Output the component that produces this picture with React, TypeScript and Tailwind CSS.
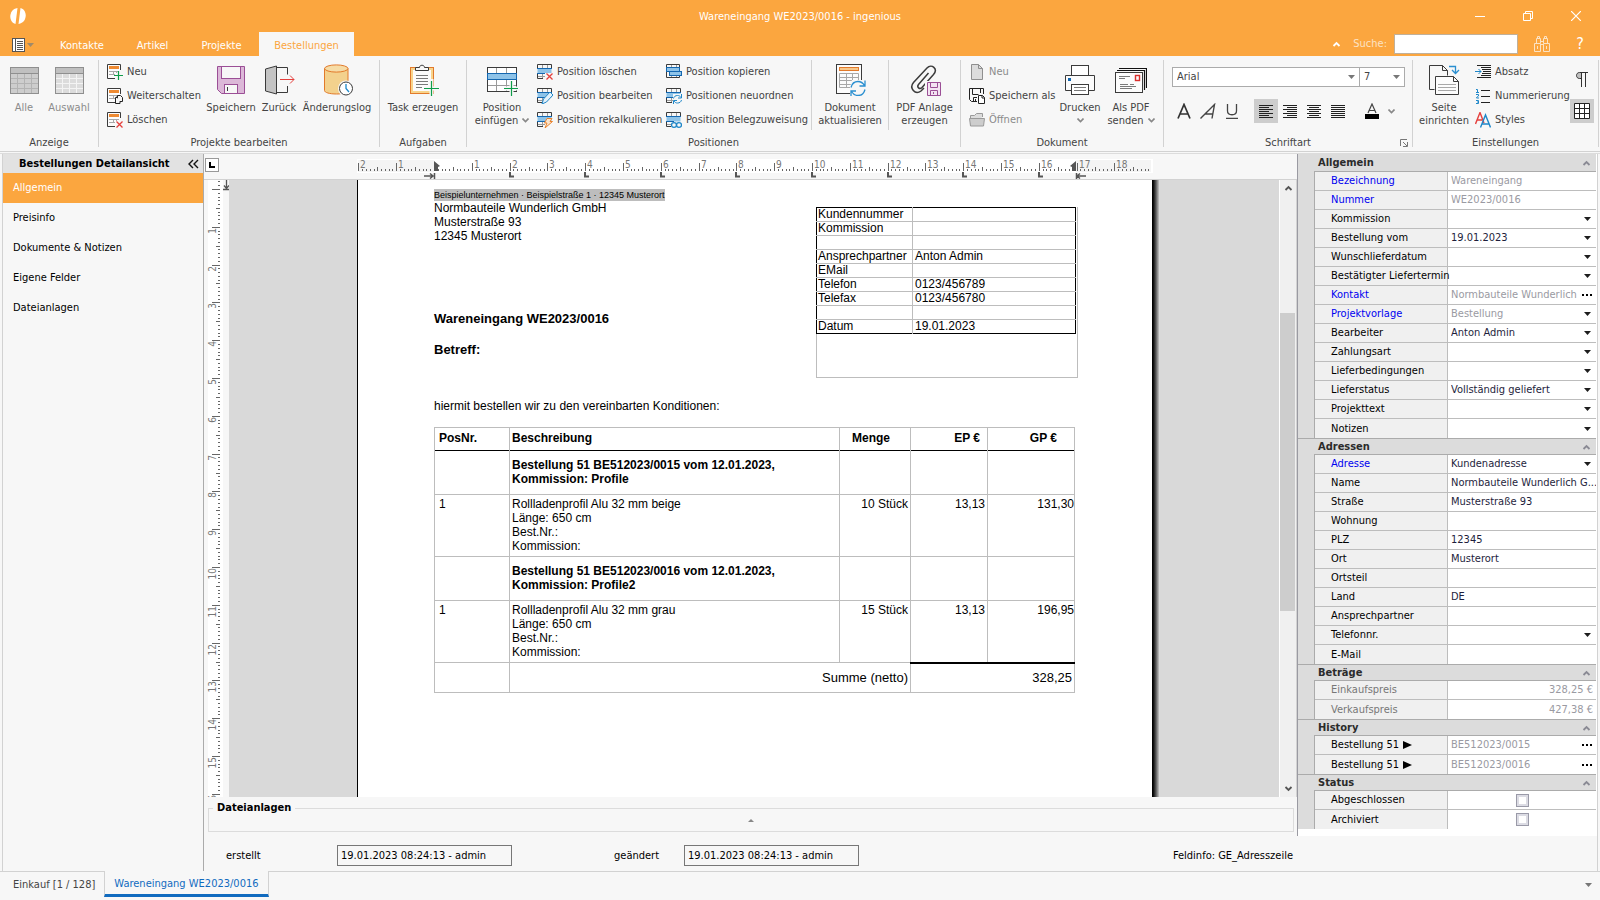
import type { ReactNode } from "react";
import clsx from "clsx";

/* ---------- shared icon parts ---------- */

const Svg = ({
  size,
  children,
}: {
  size: number;
  children: ReactNode;
}) => (
  <svg
    width={size}
    height={size}
    viewBox={`0 0 ${size} ${size}`}
    fill="none"
    className="shrink-0"
    aria-hidden="true"
  >
    {children}
  </svg>
);

const Chevron = ({ className }: { className?: string }) => (
  <svg width="7" height="5" viewBox="0 0 7 5" fill="none" className={className} aria-hidden="true">
    <path d="M0.5 0.5 3.5 3.5 6.5 0.5" stroke="currentColor" strokeWidth="1.6" />
  </svg>
);

const ChevronUp = ({ className }: { className?: string }) => (
  <svg width="9" height="6" viewBox="0 0 9 6" fill="none" className={className} aria-hidden="true">
    <path d="M1.5 5 4.5 2 7.5 5" stroke="currentColor" strokeWidth="1.8" />
  </svg>
);

const Caret = ({ className }: { className?: string }) => (
  <svg width="7" height="4" viewBox="0 0 7 4" className={className} aria-hidden="true">
    <path d="M0 0h7L3.5 4z" fill="currentColor" />
  </svg>
);

/* ---------- 32px icons ---------- */

const GridIcon = ({ light }: { light?: boolean }) => (
  <Svg size={32}>
    <rect x="2.5" y="3.5" width="28" height="26" fill={light ? "#dcdcdc" : "#cdcdcd"} stroke="#8f8f8f" />
    <path d="M3 4h27v5H3z" fill="#c0c0c0" />
    <path d="M2 9.5h29" stroke="#8f8f8f" />
    <path
      d="M3 14.5h27M3 19.5h27M3 24.5h27M9.5 10v19M16.5 10v19M23.5 10v19"
      stroke={light ? "#f4f4f4" : "#b3b3b3"}
    />
  </Svg>
);

const SaveIcon = () => (
  <Svg size={32}>
    <path d="M2.5 2.5h27v27H6.5L2.5 25.5z" fill="#dcb8d8" stroke="#9b4f96" />
    <rect x="6.5" y="2.5" width="19" height="12" fill="#f7f7f7" stroke="#9b4f96" />
    <rect x="9.5" y="20.5" width="13" height="9" fill="#f7f7f7" stroke="#9b4f96" />
    <path d="M12.5 23v4" stroke="#3b3b3b" />
  </Svg>
);

const DoorIcon = () => (
  <Svg size={32}>
    <path d="M14 3.5h10.5v7M24.5 22v6.5H14" stroke="#3b3b3b" />
    <path d="M2.5 5 13.5 2v28L2.5 27z" fill="#c4c4c4" stroke="#3b3b3b" />
    <path d="M17 15.5h14M27 11.5l4 4-4 4" stroke="#e5403d" />
  </Svg>
);

const LogIcon = () => (
  <Svg size={32}>
    <path d="M3.5 4.5v22c0 2 5 3.5 12 3.5s11.500-1.500 11.500-3.500v-22z" fill="#f3d18d" stroke="#e27a2b" />
    <ellipse cx="15.3" cy="4.5" rx="11.7" ry="3.600" fill="#f6dca6" stroke="#e27a2b" />
    <circle cx="25" cy="24.500" r="8" fill="#f7f7f7" />
    <circle cx="25" cy="24.500" r="6.500" fill="#fff" stroke="#3b3b3b" />
    <path d="M25 20v4.500l3 3.500" stroke="#1e88c9" strokeWidth="1.3" />
  </Svg>
);

const TaskIcon = () => (
  <Svg size={32}>
    <rect x="3.5" y="3.5" width="23" height="26" fill="#f8d48c" stroke="#e27a2b" />
    <rect x="6" y="6" width="18" height="21" fill="#fcfcfc" />
    <path d="M8.5 6.5v-3h4c0-3 5-3 5 0h4v3z" fill="#f7f7f7" stroke="#3b3b3b" />
    <path d="M9 11.5h12M9 14.5h12M9 17.5h12M9 20.5h12M9 23.5h6" stroke="#7a7a7a" />
    <path d="M24.5 15v17M17 24.5h15" stroke="#f7f7f7" strokeWidth="4" />
    <path d="M24.5 17v15M17 24.5h15" stroke="#0f9d4a" strokeWidth="1.2" />
  </Svg>
);

const InsertIcon = () => (
  <Svg size={32}>
    <rect x="1.5" y="3.5" width="29" height="24" fill="#fff" />
    <path d="M10.5 4v23M20.5 4v23M2 21.5h28" stroke="#9a9a9a" />
    <rect x="1.5" y="3.5" width="29" height="24" stroke="#3b3b3b" />
    <rect x="1.5" y="9.5" width="29" height="6" fill="#8ec3e8" stroke="#1467b0" />
    <path d="M25.5 17v15M18 24.5h14" stroke="#f7f7f7" strokeWidth="4" />
    <path d="M25.5 17v15M18 24.5h14" stroke="#0f9d4a" strokeWidth="1.2" />
  </Svg>
);

const RefreshDocIcon = () => (
  <Svg size={32}>
    <rect x="2.5" y="0.5" width="25" height="29" fill="#fcfcfc" stroke="#3b3b3b" />
    <rect x="5.5" y="3.5" width="19" height="3" fill="#f8c88c" stroke="#e27a2b" />
    <path d="M5.5 9.5h19v14h-19zM5.5 13.5h19M5.5 16.5h19M5.5 20.5h19M12.5 9.5v14M18.5 9.5v14" stroke="#a8a8a8" />
    <path d="M18 16h14v16H16v-9z" fill="#f7f7f7" />
    <path
      d="M17 23.5c1-4 4-6 7-6 3 0 5 1.5 6.5 4M31 16.5v5.5h-5.5M31 25.5c-1 4-4 6-7 6-3 0-5-1.5-6.5-4M17 32v-5h5"
      stroke="#2a8fd0"
      strokeWidth="1.3"
    />
  </Svg>
);

const ClipIcon = () => (
  <Svg size={32}>
    <path
      d="M19.5 9 9.5 20.5c-2 2.5 1 5.5 3.5 3L24.5 10.5c5-6-2-11-6.5-6.5L4.5 18.5C0 24 6 31.5 12 27l3-3"
      stroke="#3b3b3b"
      strokeWidth="1.5"
    />
    <rect x="16" y="17" width="16" height="15" fill="#f7f7f7" />
    <path d="M18.5 18.5h13v13h-13z" fill="#f3e4f2" stroke="#9b4f96" />
    <path d="M21.5 18.5h7v5h-7zM21.5 31v-4.5h7V31M24.5 28v2" stroke="#9b4f96" />
  </Svg>
);

const PrintIcon = () => (
  <Svg size={32}>
    <rect x="7.5" y="1.5" width="17" height="12" fill="#fff" stroke="#3b3b3b" />
    <path d="M1.5 11.5h29v15h-29z" fill="#fcfcfc" stroke="#3b3b3b" />
    <rect x="4" y="14" width="3" height="3" fill="#1467b0" />
    <rect x="7.5" y="20.5" width="17" height="10" fill="#fff" stroke="#3b3b3b" />
    <path d="M10 23.5h12M10 26.5h12" stroke="#7a7a7a" />
    <path d="M8 11.5h16" stroke="#3b3b3b" />
  </Svg>
);

const MailIcon = () => (
  <Svg size={32}>
    <path d="M4 4.5h27.5V24M2 6.5h27.5V26" stroke="#111" strokeWidth="1.2" />
    <rect x="0.5" y="8.5" width="27" height="20" fill="#fcfcfc" stroke="#3b3b3b" />
    <rect x="20.5" y="11.5" width="4" height="5" stroke="#d9302d" strokeWidth="1.4" />
    <path d="M4 12.5h11M4 14.5h6M5 20.5h8M15 20.5h4M5 22.5h16M5 24.5h12" stroke="#7a7a7a" />
  </Svg>
);

const PageSetupIcon = () => (
  <Svg size={32}>
    <path d="M6.5 25.5h-5v-24h13l5 5v5" stroke="#3b3b3b" />
    <path d="M14.5 1.5v5h5" stroke="#3b3b3b" />
    <path d="M21 2.5h6.5V9M24 6l3.5 3.5L31 6" stroke="#2a8fd0" strokeWidth="1.3" />
    <path d="M7.5 12.5h18l5 5v13h-23z" fill="#fcfcfc" stroke="#3b3b3b" />
    <path d="M25.5 12.5v5h5" stroke="#3b3b3b" />
    <path d="M10 20.5h18M10 23.5h18M10 26.5h18" stroke="#a8a8a8" />
  </Svg>
);

/* ---------- 16px icons ---------- */

const FormBase = () => (
  <>
    <path d="M8 14.5H0.5v-14h13V6" fill="#fcfcfc" stroke="#3b3b3b" />
    <rect x="2" y="2" width="10" height="3" fill="#ee8a32" />
    <path d="M2 7.5h10M2 10.5h6M6.5 7v4M9.5 7v2" stroke="#a8a8a8" />
  </>
);

const NewIcon = () => (
  <Svg size={16}>
    <FormBase />
    <path d="M11.5 7v9M7 11.5h9" stroke="#0f9d4a" strokeWidth="1.2" />
  </Svg>
);

const ForwardIcon = () => (
  <Svg size={16}>
    <FormBase />
    <path d="M10.5 7.5h3l2 2v4h-5z" fill="#f7f7f7" stroke="#222" />
    <path d="M10 9.5H8.5v6H13v-2" fill="#f7f7f7" stroke="#222" />
  </Svg>
);

const DeleteIcon = () => (
  <Svg size={16}>
    <FormBase />
    <path d="M9.5 9.5 15.5 15.5M15.5 9.5 9.5 15.5" stroke="#e5403d" strokeWidth="1.3" />
  </Svg>
);

const RowBase = () => (
  <>
    <path d="M5.5 1v14M10.5 1v5M1 12.5h7" stroke="#9a9a9a" />
    <path d="M0.5 4V0.5h14V4M0.5 10v4.5H6" stroke="#3b3b3b" />
    <rect x="0.5" y="4.5" width="14" height="5" fill="#8ec3e8" />
    <path d="M0 4.5h15M0 9.5h8" stroke="#1467b0" />
  </>
);

const RowDeleteIcon = () => (
  <Svg size={16}>
    <RowBase />
    <rect x="8" y="9" width="8" height="7" fill="#f7f7f7" />
    <path d="M9.5 9.5 15.5 15.5M15.5 9.5 9.5 15.5" stroke="#e5403d" strokeWidth="1.3" />
  </Svg>
);

const RowEditIcon = () => (
  <Svg size={16}>
    <RowBase />
    <path d="M5 16 6.5 11 13 4l3 3-6.5 7z" fill="#e4f1fa" stroke="#1f87c9" />
  </Svg>
);

const RowCalcIcon = () => (
  <Svg size={16}>
    <RowBase />
    <path d="M10 6.5h5l-2 3h2.5L8 16l2-5H7.5z" fill="#fbe6cf" stroke="#e9832d" />
  </Svg>
);

const RowCopyIcon = () => (
  <Svg size={16}>
    <path d="M5.5 1v13M10.5 1v13" stroke="#9a9a9a" />
    <path d="M0.5 4V0.5h13V4M0.5 8v5.5H13.5V11" stroke="#3b3b3b" />
    <rect x="0.5" y="3.5" width="13" height="4" fill="#8ec3e8" stroke="#1467b0" />
    <rect x="3.5" y="7.5" width="12" height="4" fill="#8ec3e8" stroke="#1467b0" />
  </Svg>
);

const RowSortIcon = () => (
  <Svg size={16}>
    <RowBase />
    <rect x="7" y="6" width="9" height="10" fill="#f7f7f7" />
    <path
      d="M7.5 10.5c.5-2 2-3 4-3 1.5 0 2.5.5 3.5 2M15.5 6v4H12M15.5 12c-.5 2-2 3-4 3-1.5 0-2.5-.5-3.5-2M7.5 16v-3.5H11"
      stroke="#1f87c9"
    />
  </Svg>
);

const RowLinkIcon = () => (
  <Svg size={16}>
    <RowBase />
    <rect x="5" y="10" width="11" height="6" fill="#f7f7f7" />
    <ellipse cx="8" cy="13" rx="2.5" ry="2.3" stroke="#1f87c9" strokeWidth="1.3" />
    <ellipse cx="13" cy="13" rx="2.5" ry="2.3" stroke="#1f87c9" strokeWidth="1.3" />
  </Svg>
);

const FileIcon = () => (
  <Svg size={16}>
    <path d="M2.5 0.5h7l4 4v11h-11z" fill="#dcdcdc" stroke="#8f8f8f" />
    <path d="M9.5 0.5v4h4" stroke="#8f8f8f" />
  </Svg>
);

const SaveAsIcon = () => (
  <Svg size={16}>
    <path d="M8 13.5H2.5L0.5 11.5V0.5h14V6M3.5 1v5.5h6M11.5 1v4M4.5 13V9.5H8M6.5 11v2" stroke="#222" />
    <path d="M9.5 7.5h4l2 2v6h-6z" fill="#fff" stroke="#222" />
    <path d="M13 7.5v2.5h2.5" stroke="#222" />
  </Svg>
);

const FolderIcon = () => (
  <Svg size={16}>
    <path d="M1.5 13.5v-10h4l2-2h6v3.5" fill="#dcdcdc" stroke="#9a9a9a" />
    <path d="M0.5 6.5h15l-1 7.5h-13z" fill="#cdcdcd" stroke="#9a9a9a" />
  </Svg>
);

const ParagraphIcon = () => (
  <Svg size={16}>
    <path d="M2 1.5h14M6 3.5h10M7 5.5h9M8 7.5h8M7 9.5h9M6 11.5h10M2 13.5h14" stroke="#222" />
    <path d="M0 7.5h6M3.5 5l2.5 2.5L3.5 10" stroke="#1f87c9" />
  </Svg>
);

const NumberingIcon = () => (
  <Svg size={16}>
    <path d="M6 2.5h9M6 8.5h9M6 14.5h9" stroke="#222" />
    <path d="M1 1.5h1.5V4M1 4.5h3M1 6.5h2.5v1.5L1.5 9.5V10H4M1 12.5h2.5v3H1M2 14h1.5" stroke="#1f87c9" />
  </Svg>
);

const StylesIcon = () => (
  <Svg size={16}>
    <path d="M0.5 12 5 0.5 9 11M2 8h5" stroke="#e5403d" strokeWidth="1.4" />
    <path d="M5.5 15.5 10.5 3l5 12.5M7 12h7" stroke="#1f87c9" strokeWidth="1.4" />
  </Svg>
);

const AlignIcon = ({ ends }: { ends: [number, number] }) => (
  <svg width="14" height="13" viewBox="0 0 14 13" aria-hidden="true">
    {[0, 2, 4, 6, 8, 10, 12].map((y, i) => (
      <rect
        key={y}
        x={i % 2 ? ends[0] : 0}
        y={y}
        width={i % 2 ? ends[1] : 14}
        height="1"
        fill="#222"
      />
    ))}
  </svg>
);

/* ---------- ribbon parts ---------- */

const Group = ({
  label,
  className,
  children,
  launcher,
}: {
  label: string;
  className?: string;
  children: ReactNode;
  launcher?: boolean;
}) => (
  <section className={clsx("flex shrink-0 flex-col", className)} aria-label={label}>
    <div className="flex h-20 pt-1">{children}</div>
    <div className="relative h-4 text-center leading-4">
      {label}
      {launcher && (
        <button aria-label="Schriftart öffnen" className="absolute right-1 top-1">
          <svg width="8" height="8" viewBox="0 0 8 8" fill="none">
            <path d="M0.5 7V0.5H7M7.5 3v4.5H3M3 3l4 4" stroke="#777" />
          </svg>
        </button>
      )}
    </div>
  </section>
);

const Divider = () => <div className="mt-1 h-[87px] w-px shrink-0 bg-[#d2d2d2]" />;

const ShortDivider = () => <div className="h-[70px] w-px shrink-0 bg-[#d2d2d2]" />;

const BigButton = ({
  icon,
  lines,
  className,
  menu,
  disabled,
}: {
  icon: ReactNode;
  lines: string[];
  className?: string;
  menu?: boolean;
  disabled?: boolean;
}) => (
  <button
    disabled={disabled}
    className={clsx(
      "flex shrink-0 flex-col items-center whitespace-nowrap pt-1 leading-[13px]",
      disabled && "text-[#8b8b8b]",
      className
    )}
  >
    <span className="mb-[5px]">{icon}</span>
    {lines.map((line, i) => (
      <span key={i} className="flex h-[13px] items-center gap-1">
        {line}
        {menu && i === lines.length - 1 && <Chevron className="text-[#888]" />}
      </span>
    ))}
  </button>
);

const SmallButton = ({
  icon,
  label,
  disabled,
}: {
  icon: ReactNode;
  label: string;
  disabled?: boolean;
}) => (
  <button
    disabled={disabled}
    className={clsx(
      "flex h-6 items-center gap-1 whitespace-nowrap text-left",
      disabled && "text-[#8b8b8b]"
    )}
  >
    {icon}
    {label}
  </button>
);

const Ribbon = () => (
  <div className="flex h-24 overflow-hidden border-b border-[#d2d2d2] bg-[#f7f7f7] text-[#444]">
    <Group label="Anzeige" className="w-[98px]">
      <BigButton icon={<GridIcon />} lines={["Alle"]} className="w-12" disabled />
      <BigButton icon={<GridIcon light />} lines={["Auswahl"]} className="w-[42px]" disabled />
    </Group>
    <Divider />
    <Group label="Projekte bearbeiten" className="w-[280px]">
      <div className="flex w-[105px] flex-col pl-2">
        <SmallButton icon={<NewIcon />} label="Neu" />
        <SmallButton icon={<ForwardIcon />} label="Weiterschalten" />
        <SmallButton icon={<DeleteIcon />} label="Löschen" />
      </div>
      <BigButton icon={<SaveIcon />} lines={["Speichern"]} className="w-[54px]" />
      <BigButton icon={<DoorIcon />} lines={["Zurück"]} className="w-[42px]" />
      <BigButton icon={<LogIcon />} lines={["Änderungslog"]} className="w-[74px]" />
    </Group>
    <Divider />
    <Group label="Aufgaben" className="w-[86px]">
      <BigButton icon={<TaskIcon />} lines={["Task erzeugen"]} className="w-full" />
    </Group>
    <Divider />
    <Group label="Positionen" className="w-[493px]">
      <BigButton icon={<InsertIcon />} lines={["Position", "einfügen"]} className="w-[70px]" menu />
      <div className="flex w-[129px] flex-col">
        <SmallButton icon={<RowDeleteIcon />} label="Position löschen" />
        <SmallButton icon={<RowEditIcon />} label="Position bearbeiten" />
        <SmallButton icon={<RowCalcIcon />} label="Position rekalkulieren" />
      </div>
      <div className="flex w-[145px] flex-col">
        <SmallButton icon={<RowCopyIcon />} label="Position kopieren" />
        <SmallButton icon={<RowSortIcon />} label="Positionen neuordnen" />
        <SmallButton icon={<RowLinkIcon />} label="Position Belegzuweisung" />
      </div>
      <ShortDivider />
      <BigButton icon={<RefreshDocIcon />} lines={["Dokument", "aktualisieren"]} className="w-[76px]" />
      <ShortDivider />
      <BigButton icon={<ClipIcon />} lines={["PDF Anlage", "erzeugen"]} className="w-[71px]" />
    </Group>
    <Divider />
    <Group label="Dokument" className="w-[202px]">
      <div className="flex w-[94px] flex-col pl-2">
        <SmallButton icon={<FileIcon />} label="Neu" disabled />
        <SmallButton icon={<SaveAsIcon />} label="Speichern als" />
        <SmallButton icon={<FolderIcon />} label="Öffnen" disabled />
      </div>
      <BigButton icon={<PrintIcon />} lines={["Drucken", ""]} className="w-[50px]" menu />
      <BigButton icon={<MailIcon />} lines={["Als PDF", "senden"]} className="w-[52px]" menu />
    </Group>
    <Divider />
    <Group label="Schriftart" className="w-[248px]" launcher>
      <div className="flex flex-col pl-2 pt-[7px]">
        <div className="flex">
          <label className="flex h-5 w-[188px] items-center border border-[#ababab] bg-white pr-1">
            <select
              aria-label="Schriftart"
              className="w-full appearance-none bg-transparent pl-1 outline-none"
            >
              <option>Arial</option>
            </select>
            <Caret className="pointer-events-none shrink-0 text-[#777]" />
          </label>
          <label className="-ml-px flex h-5 w-[46px] items-center border border-[#ababab] bg-white pr-1">
            <select
              aria-label="Schriftgröße"
              className="w-full appearance-none bg-transparent pl-1 outline-none"
            >
              <option>7</option>
            </select>
            <Caret className="pointer-events-none shrink-0 text-[#777]" />
          </label>
        </div>
        <div className="mt-3 flex items-center">
          <button aria-label="Fett" className="flex size-6 items-center justify-center">
            <Svg size={16}>
              <path d="M2 15.5 8 1.5l6 14M4 11h8" stroke="#333" strokeWidth="1.7" />
            </Svg>
          </button>
          <button aria-label="Kursiv" className="flex size-6 items-center justify-center">
            <Svg size={16}>
              <path d="M0.5 15.5 14.5 1.5 12 15.5M5 11h8" stroke="#444" strokeWidth="1.4" />
            </Svg>
          </button>
          <button aria-label="Unterstrichen" className="flex size-6 items-center justify-center">
            <Svg size={16}>
              <path d="M3.5 1v7c0 5 9 5 9 0V1M2 15.5h12" stroke="#444" strokeWidth="1.3" />
            </Svg>
          </button>
          <button
            aria-label="Linksbündig"
            className="ml-[10px] flex size-6 items-center justify-center bg-[#cdcdcd]"
          >
            <AlignIcon ends={[0, 10]} />
          </button>
          <button aria-label="Rechtsbündig" className="flex size-6 items-center justify-center">
            <AlignIcon ends={[4, 10]} />
          </button>
          <button aria-label="Zentriert" className="flex size-6 items-center justify-center">
            <AlignIcon ends={[2, 10]} />
          </button>
          <button aria-label="Blocksatz" className="flex size-6 items-center justify-center">
            <AlignIcon ends={[0, 14]} />
          </button>
          <button aria-label="Schriftfarbe" className="ml-[14px] flex h-6 items-center gap-2">
            <Svg size={16}>
              <path d="M4 10 8 1l4 9M5 7.5h6" stroke="#444" strokeWidth="1.2" />
              <path d="M1 11h14v5H1z" fill="#000" />
            </Svg>
            <Chevron className="text-[#888]" />
          </button>
        </div>
      </div>
    </Group>
    <Divider />
    <Group label="Einstellungen" className="w-[185px]">
      <BigButton icon={<PageSetupIcon />} lines={["Seite", "einrichten"]} className="w-[62px]" />
      <div className="flex w-[95px] flex-col">
        <SmallButton icon={<ParagraphIcon />} label="Absatz" />
        <SmallButton icon={<NumberingIcon />} label="Nummerierung" />
        <SmallButton icon={<StylesIcon />} label="Styles" />
      </div>
      <div className="flex flex-col gap-2 pt-[7px]">
        <button aria-label="Formatierungszeichen" className="flex size-6 items-center justify-center">
          <Svg size={16}>
            <path d="M14 1.5H5.5c-4 0-4 6 0 6h2V1.5" fill="#c0c0c0" stroke="#333" />
            <path d="M7.5 1.5V16M11.5 1.5V16" stroke="#333" />
          </Svg>
        </button>
        <button aria-label="Rasterlinien" className="flex size-6 items-center justify-center bg-[#cdcdcd]">
          <Svg size={16}>
            <path
              d="M0.5 0.5h15v15h-15zM5.5 0v16M10.5 0v16M0 5.5h16M0 10.5h16"
              fill="#fff"
              stroke="#222"
            />
          </Svg>
        </button>
      </div>
    </Group>
    <Divider />
  </div>
);

/* ---------- title bar ---------- */

const TABS = [
  { name: "Kontakte", width: "w-[78px]" },
  { name: "Artikel", width: "w-[63px]" },
  { name: "Projekte", width: "w-[75px]" },
  { name: "Bestellungen", width: "w-[95px]", active: true },
];

const TitleBar = () => (
  <header className="bg-[#fba63f] text-white">
    <div className="flex h-8 items-center">
      <div className="flex w-36 pl-[10px]">
        <Svg size={16}>
          <path d="M7.5 0 5.5 16C-1.5 14.5-2 1.5 7.5 0z" fill="#fff" />
          <path d="M10.5 0C17.5 1.5 18 14.5 8.5 16z" fill="#fff" />
        </Svg>
      </div>
      <div className="flex-1 pt-px text-center">Wareneingang WE2023/0016 - ingenious</div>
      <div className="flex w-36">
        <button aria-label="Minimieren" className="flex h-8 w-12 items-center justify-center">
          <span className="h-px w-[10px] bg-white" />
        </button>
        <button aria-label="Wiederherstellen" className="flex h-8 w-12 items-center justify-center">
          <svg width="10" height="10" viewBox="0 0 10 10" fill="none">
            <path d="M0.5 2.5h7v7h-7zM2.5 2.5v-2h7v7h-2" stroke="#fff" />
          </svg>
        </button>
        <button aria-label="Schließen" className="flex h-8 w-12 items-center justify-center">
          <svg width="10" height="10" viewBox="0 0 10 10" fill="none">
            <path d="M0 0 10 10M10 0 0 10" stroke="#fff" strokeWidth="1.2" />
          </svg>
        </button>
      </div>
    </div>
    <div className="flex h-6 items-stretch">
      <button aria-label="Menü" className="flex w-[43px] items-center gap-[2px] pl-3 pt-[2px]">
        <svg width="13" height="14" viewBox="0 0 13 14" fill="none">
          <rect x="0.5" y="0.5" width="12" height="13" fill="#fff" stroke="#555" />
          <path d="M3.5 0v14M5 3.5h6M5 5.5h6M5 7.5h6M5 9.5h6M5 11.5h6" stroke="#555" />
        </svg>
        <Caret className="text-[#a08a68]" />
      </button>
      <nav className="flex">
        {TABS.map((tab) => (
          <a
            key={tab.name}
            href="#"
            className={clsx(
              "flex items-center justify-center pt-[3px]",
              tab.width,
              tab.active && "bg-[#f7f7f7] text-[#fba63f]"
            )}
          >
            {tab.name}
          </a>
        ))}
      </nav>
      <div className="ml-auto flex items-center pr-4">
        <ChevronUp className="mr-3 text-white" />
        <label htmlFor="suche" className="mr-[7px] text-[#fbe3c4]">
          Suche:
        </label>
        <input id="suche" className="h-5 w-[124px] border border-[#c0b09a] bg-white px-1 text-black outline-none" />
        <button aria-label="Suchen" className="ml-4">
          <svg width="16" height="16" viewBox="0 0 16 16" fill="none">
            <path
              d="M0.5 7.5h6v8h-6zM9.5 7.5h6v8h-6zM2.5 7V2.5h4V7M9.5 7V2.5h4V7M3.5 2V0.5h2V2M10.5 2V0.5h2V2M7 5.5h2M7 8.5h2M3.5 10v3M12.5 10v3"
              stroke="#fbe3c4"
            />
          </svg>
        </button>
        <button aria-label="Hilfe" className="ml-[26px] w-2 text-base leading-4">
          ?
        </button>
      </div>
    </div>
  </header>
);

/* ---------- sidebar ---------- */

const Sidebar = () => (
  <aside className="ml-[2px] w-[202px] shrink-0 border-x border-l-[#d2d2d2] border-r-[#ababab]">
    <div className="flex h-[19px] items-center justify-between bg-[#e2e2e2] pl-4 pr-1 font-bold text-black">
      Bestellungen Detailansicht
      <button aria-label="Einklappen">
        <svg width="11" height="10" viewBox="0 0 11 10" fill="none">
          <path d="M5 1 1 5l4 4M10 1 6 5l4 4" stroke="#111" strokeWidth="1.4" />
        </svg>
      </button>
    </div>
    <nav>
      {["Allgemein", "Preisinfo", "Dokumente & Notizen", "Eigene Felder", "Dateianlagen"].map((item, i) => (
        <a
          key={item}
          href="#"
          className={clsx("flex h-[30px] items-center pl-[10px]", i === 0 ? "bg-[#fba63f] text-white" : "text-black")}
        >
          {item}
        </a>
      ))}
    </nav>
  </aside>
);

/* ---------- rulers ---------- */

const CM = 37.8;

const tickLength = (mm: number) => (mm % 10 === 0 ? 8 : mm % 5 === 0 ? 4 : 2);

const HorizontalRuler = () => {
  const ticks = Array.from({ length: 210 }, (_, i) => i - 20);
  return (
    <svg width="797" height="26" viewBox="0 0 797 26" className="shrink-0" aria-hidden="true">
      <rect x="1" y="5" width="796" height="14" fill="#fff" />
      <rect x="2" y="6" width="76" height="12" fill="#f4f4f4" />
      <rect x="720" y="6" width="75" height="12" fill="#f4f4f4" />
      {ticks.map((mm) => (
        <rect
          key={mm}
          x={Math.round(78 + (mm * CM) / 10)}
          y={17 - tickLength(mm)}
          width="1"
          height={tickLength(mm)}
          fill="#666"
        />
      ))}
      {[-2, -1, 1, 2, 3, 4, 5, 6, 7, 8, 9, 10, 11, 12, 13, 14, 15, 16, 17, 18].map((cm) => (
        <text key={cm} x={Math.round(80 + cm * CM)} y="14" fontSize="10" fill="#777">
          {Math.abs(cm)}
        </text>
      ))}
      {[2, 4, 6, 8, 10, 12, 14, 16].map((cm) => (
        <path key={cm} d={`M${Math.round(77 + cm * CM) + 1} 18v4.5h4`} stroke="#555" strokeWidth="2" fill="none" />
      ))}
      <path d="M78 7l6 5-2 1v4h-4z" fill="#555" />
      <path d="M720 7v10h-4v-4l-2-1z" fill="#555" />
      <path d="M68 22h9M74 19.5l3 2.5-3 2.5M78.5 19v6" stroke="#555" strokeWidth="1.5" fill="none" />
      <path d="M730 22h-9M724 19.5l-3 2.5 3 2.5M720.5 19v6" stroke="#555" strokeWidth="1.5" fill="none" />
    </svg>
  );
};

const VerticalRuler = () => {
  const ticks = Array.from({ length: 163 }, (_, i) => i - 2);
  return (
    <div className="relative w-[25px] shrink-0 overflow-hidden">
      <svg width="25" height="900" viewBox="0 0 25 900" className="absolute left-0 top-0" aria-hidden="true">
        <rect x="4" width="15" height="900" fill="#fff" />
        {ticks.map((mm) => (
          <rect
            key={mm}
            x={16 - tickLength(mm)}
            y={Math.round(9 + (mm * CM) / 10)}
            width={tickLength(mm)}
            height="1"
            fill="#666"
          />
        ))}
        {Array.from({ length: 16 }, (_, i) => i + 1).map((cm) => (
          <text
            key={cm}
            fontSize="10"
            fill="#777"
            textAnchor="end"
            transform={`translate(12 ${Math.round(10 + cm * CM)}) rotate(-90)`}
          >
            {cm}
          </text>
        ))}
        <path d="M22.5 0v8M20 5.5l2.5 3 2.5-3M19 9.5h6" stroke="#555" strokeWidth="1.3" fill="none" />
      </svg>
    </div>
  );
};

/* ---------- document ---------- */

const INFO_ROWS = [
  ["Kundennummer", ""],
  ["Kommission", ""],
  ["", ""],
  ["Ansprechpartner", "Anton Admin"],
  ["EMail", ""],
  ["Telefon", "0123/456789"],
  ["Telefax", "0123/456780"],
  ["", ""],
  ["Datum", "19.01.2023"],
];

const POSITIONS = [
  {
    title: ["Bestellung 51 BE512023/0015 vom 12.01.2023,", "Kommission: Profile"],
    lines: ["Rollladenprofil Alu 32 mm beige", "Länge: 650 cm", "Best.Nr.:", "Kommission:"],
    amount: "10 Stück",
    ep: "13,13",
    gp: "131,30",
  },
  {
    title: ["Bestellung 51 BE512023/0016 vom 12.01.2023,", "Kommission: Profile2"],
    lines: ["Rollladenprofil Alu 32 mm grau", "Länge: 650 cm", "Best.Nr.:", "Kommission:"],
    amount: "15 Stück",
    ep: "13,13",
    gp: "196,95",
  },
];

const cell = "border border-[#bdbdbd]";
const openCell = "border-x border-b border-[#bdbdbd]";
const headCell = "border-x border-t border-[#bdbdbd]";

const Page = () => (
  <div className="flex w-[802px] shrink-0">
    <article className="w-[795px] shrink-0 border-l border-black bg-white pl-[76px] pr-[74px] pt-[9px] font-['Liberation_Sans',Arial,sans-serif] text-xs leading-[14px] text-black">
      <div className="flex justify-between">
        <div>
          <div className="h-3 w-fit bg-[#bdbdbd] text-[9px] leading-3">
            Beispielunternehmen · Beispielstraße 1 · 12345 Musterort
          </div>
          <p>
            Normbauteile Wunderlich GmbH
            <br />
            Musterstraße 93
            <br />
            12345 Musterort
          </p>
          <h1 className="mt-[68px] text-[13px] font-bold leading-4">Wareneingang WE2023/0016</h1>
          <h2 className="mt-[15px] text-[13px] font-bold leading-4">Betreff:</h2>
        </div>
        <div className="mt-[18px] h-[171px] w-[262px] shrink-0 border border-t-0 border-[#bdbdbd]">
          <table className="-ml-px w-[260px] table-fixed border-collapse border border-black">
            <tbody>
              {INFO_ROWS.map(([name, value], i) => (
                <tr
                  key={i}
                  className="h-[14px] border-y border-[#bdbdbd] align-top leading-3 first:border-t-black last:border-b-black"
                >
                  <th className="w-24 border-r border-[#bdbdbd] p-0 pl-px text-left font-normal">{name}</th>
                  <td className="p-0 pl-[2px]">{value}</td>
                </tr>
              ))}
            </tbody>
          </table>
        </div>
      </div>
      <p className="mt-[21px]">hiermit bestellen wir zu den vereinbarten Konditionen:</p>
      <table className="mt-[14px] w-[641px] table-fixed border-collapse">
        <thead>
          <tr className="h-[23px] border-b border-black">
            <th className={clsx(headCell, "w-[75px] p-0 pb-[2px] pl-1 text-left")}>PosNr.</th>
            <th className={clsx(headCell, "p-0 pb-[2px] pl-[2px] text-left")}>Beschreibung</th>
            <th className={clsx(headCell, "w-[71px] p-0 pb-[2px] pr-5 text-right")}>Menge</th>
            <th className={clsx(headCell, "w-[77px] p-0 pb-[2px] pr-[7px] text-right")}>EP €</th>
            <th className={clsx(headCell, "w-[87px] p-0 pb-[2px] pr-[17px] text-right")}>GP €</th>
          </tr>
        </thead>
        {POSITIONS.map((pos) => (
          <tbody key={pos.gp}>
            <tr className="h-11">
              <td className={openCell} />
              <td className={clsx(openCell, "whitespace-nowrap p-0 pb-[2px] pl-[2px] font-bold")}>
                {pos.title[0]}
                <br />
                {pos.title[1]}
              </td>
              <td className={openCell} />
              <td className={openCell} />
              <td className={openCell} />
            </tr>
            <tr className="h-[62px] align-top">
              <td className={clsx(cell, "p-0 pl-1 pt-[2px]")}>1</td>
              <td className={clsx(cell, "p-0 pl-[2px] pt-[2px]")}>
                {pos.lines.map((line) => (
                  <div key={line}>{line}</div>
                ))}
              </td>
              <td className={clsx(cell, "p-0 pr-[2px] pt-[2px] text-right")}>{pos.amount}</td>
              <td className={clsx(cell, "p-0 pr-[2px] pt-[2px] text-right")}>{pos.ep}</td>
              <td className={clsx(cell, "p-0 pt-[2px] text-right")}>{pos.gp}</td>
            </tr>
          </tbody>
        ))}
        <tfoot>
          <tr className="h-[30px]">
            <td className={cell} />
            <td colSpan={2} className={clsx(cell, "p-0 pr-[2px] text-right text-[13px]")}>
              Summe (netto)
            </td>
            <td
              colSpan={2}
              className="border border-t-2 border-[#bdbdbd] border-t-black p-0 pr-[2px] text-right text-[13px]"
            >
              328,25
            </td>
          </tr>
        </tfoot>
      </table>
    </article>
    <div className="w-[7px] bg-linear-to-r from-black to-[#c4c4c4]" />
  </div>
);

const DocumentArea = () => (
  <main className="flex min-w-0 flex-1 flex-col">
    <div className="flex h-[26px] border-b border-[#d2d2d2]">
      <button
        aria-label="Tabulator"
        className="ml-px mt-1 flex size-[14px] items-center justify-center border border-[#999] bg-white"
      >
        <span className="size-[6px] border-b-2 border-l-2 border-black" />
      </button>
      <div className="flex min-w-0 flex-1 justify-center overflow-hidden pl-[10px] pr-[18px]">
        <HorizontalRuler />
      </div>
    </div>
    <div className="flex min-h-0 flex-1">
      <VerticalRuler />
      <div className="flex min-w-0 flex-1 justify-center overflow-hidden bg-[#d9d9d9] pl-2">
        <Page />
      </div>
      <div className="flex w-[18px] shrink-0 flex-col items-center border-x border-l-white border-r-[#d2d2d2] bg-[#f0f0f0]">
        <button aria-label="Nach oben" className="flex h-4 items-center">
          <ChevronUp className="text-[#555]" />
        </button>
        <div className="flex w-full flex-1 flex-col pr-px">
          <div className="basis-[20%]" />
          <div className="basis-[51%] bg-[#cdcdcd]" />
        </div>
        <button aria-label="Nach unten" className="flex h-4 items-center">
          <ChevronUp className="rotate-180 text-[#555]" />
        </button>
      </div>
    </div>
    <fieldset className="ml-1 mr-[3px] mt-1 flex h-[31px] justify-center border border-[#dcdcdc]">
      <legend className="ml-1 px-1 font-bold leading-[14px] text-black">Dateianlagen</legend>
      <button aria-label="Dateianlagen aufklappen" className="mt-1">
        <svg width="6" height="3" viewBox="0 0 6 3">
          <path d="M0 3 3 0l3 3z" fill="#888" />
        </svg>
      </button>
    </fieldset>
    <div className="mb-[5px] mt-[13px] flex items-center pl-[22px] pr-1 text-black">
      <label htmlFor="erstellt" className="w-[111px]">
        erstellt
      </label>
      <input
        id="erstellt"
        readOnly
        defaultValue="19.01.2023 08:24:13 - admin"
        className="h-[21px] w-[175px] border border-[#777] bg-transparent px-[3px] outline-none"
      />
      <label htmlFor="geaendert" className="ml-[102px] w-[70px]">
        geändert
      </label>
      <input
        id="geaendert"
        readOnly
        defaultValue="19.01.2023 08:24:13 - admin"
        className="h-[21px] w-[175px] border border-[#777] bg-transparent px-[3px] outline-none"
      />
      <span className="ml-auto whitespace-nowrap">Feldinfo: GE_Adresszeile</span>
    </div>
  </main>
);

/* ---------- property grid ---------- */

type Field = {
  name: string;
  value?: string;
  kind?: "select" | "more" | "check" | "money";
  link?: boolean;
  muted?: boolean;
  arrow?: boolean;
};

const SECTIONS: { title: string; fields: Field[] }[] = [
  {
    title: "Allgemein",
    fields: [
      { name: "Bezeichnung", value: "Wareneingang", link: true, muted: true },
      { name: "Nummer", value: "WE2023/0016", link: true, muted: true },
      { name: "Kommission", kind: "select" },
      { name: "Bestellung vom", value: "19.01.2023", kind: "select" },
      { name: "Wunschlieferdatum", kind: "select" },
      { name: "Bestätigter Liefertermin", kind: "select" },
      { name: "Kontakt", value: "Normbauteile Wunderlich", kind: "more", link: true, muted: true },
      { name: "Projektvorlage", value: "Bestellung", kind: "select", link: true, muted: true },
      { name: "Bearbeiter", value: "Anton Admin", kind: "select" },
      { name: "Zahlungsart", kind: "select" },
      { name: "Lieferbedingungen", kind: "select" },
      { name: "Lieferstatus", value: "Vollständig geliefert", kind: "select" },
      { name: "Projekttext", kind: "select" },
      { name: "Notizen", kind: "select" },
    ],
  },
  {
    title: "Adressen",
    fields: [
      { name: "Adresse", value: "Kundenadresse", kind: "select", link: true },
      { name: "Name", value: "Normbauteile Wunderlich G..." },
      { name: "Straße", value: "Musterstraße 93" },
      { name: "Wohnung" },
      { name: "PLZ", value: "12345" },
      { name: "Ort", value: "Musterort" },
      { name: "Ortsteil" },
      { name: "Land", value: "DE" },
      { name: "Ansprechpartner" },
      { name: "Telefonnr.", kind: "select" },
      { name: "E-Mail" },
    ],
  },
  {
    title: "Beträge",
    fields: [
      { name: "Einkaufspreis", value: "328,25 €", kind: "money", muted: true },
      { name: "Verkaufspreis", value: "427,38 €", kind: "money", muted: true },
    ],
  },
  {
    title: "History",
    fields: [
      { name: "Bestellung 51", value: "BE512023/0015", kind: "more", muted: true, arrow: true },
      { name: "Bestellung 51", value: "BE512023/0016", kind: "more", muted: true, arrow: true },
    ],
  },
  {
    title: "Status",
    fields: [
      { name: "Abgeschlossen", kind: "check" },
      { name: "Archiviert", kind: "check" },
    ],
  },
];

const FieldRow = ({ field, id }: { field: Field; id: string }) => {
  const tone = field.muted ? "text-[#9a9aa2]" : "text-[#1e1e3c]";
  return (
    <div className="flex h-[19px] border-b border-[#bdbdbd] last:border-b-0">
      <label
        htmlFor={id}
        className={clsx(
          "relative flex w-[133px] shrink-0 items-center gap-1 whitespace-nowrap border-r border-[#bdbdbd] bg-[#f0f0f0] pl-4",
          field.link ? "text-[#0000f0]" : field.kind === "money" ? "text-[#777]" : "text-black"
        )}
      >
        {field.name}
        {field.arrow && (
          <svg width="9" height="8" viewBox="0 0 9 8" aria-hidden="true">
            <path d="M0 0 9 4 0 8z" fill="#000" />
          </svg>
        )}
      </label>
      <div className="flex min-w-0 flex-1 items-center bg-white">
        {field.kind === "check" && (
          <input
            id={id}
            type="checkbox"
            className="mx-auto size-[13px] appearance-none border border-[#9a9aa8] bg-white shadow-[inset_0_0_0_2px_#dcdce4]"
          />
        )}
        {field.kind === "select" && (
          <>
            <select id={id} className={clsx("min-w-0 flex-1 appearance-none bg-transparent pl-[3px] outline-none", tone)}>
              <option>{field.value ?? ""}</option>
            </select>
            <Caret className="pointer-events-none mr-[5px] shrink-0 text-[#1e1e1e]" />
          </>
        )}
        {field.kind !== "check" && field.kind !== "select" && (
          <input
            id={id}
            defaultValue={field.value}
            className={clsx(
              "min-w-0 flex-1 bg-transparent pl-[3px] outline-none",
              field.kind === "money" && "pr-[3px] text-right",
              tone
            )}
          />
        )}
        {field.kind === "more" && (
          <button aria-label={`${field.name} auswählen`} className="mr-1 flex shrink-0 gap-[2px]">
            <span className="size-[2px] bg-black" />
            <span className="size-[2px] bg-black" />
            <span className="size-[2px] bg-black" />
          </button>
        )}
      </div>
    </div>
  );
};

const PropertyPanel = () => (
  <aside className="mr-[2px] flex w-[301px] shrink-0 flex-col border-r border-[#d2d2d2]">
    <div className="border-l border-[#9a9aa2] bg-white pb-[7px] pr-px">
      {SECTIONS.map((section, i) => (
        <section key={section.title} className={clsx("bg-[#dcdcdc] pl-4", i === 0 && "pt-px")}>
          <h3
            className={clsx(
              "-ml-4 flex h-4 items-center justify-between pl-5 pr-[5px] font-bold text-[#2b2b2b]",
              i > 0 && "border-t border-[#ababab]"
            )}
          >
            {section.title}
            <ChevronUp className="text-[#8a8a94]" />
          </h3>
          <div className="border-l border-t border-[#ababab]">
            {section.fields.map((field, j) => (
              <FieldRow key={j} field={field} id={`${section.title}-${j}`} />
            ))}
          </div>
        </section>
      ))}
    </div>
  </aside>
);

/* ---------- bottom tabs ---------- */

const BottomTabs = () => (
  <footer className="flex h-[29px] items-start">
    <div className="flex h-[26px] items-center border-t border-[#d2d2d2] pl-[13px] pr-[9px] text-[#444]">
      Einkauf [1 / 128]
    </div>
    <a
      href="#"
      className="flex h-[26px] items-center border-x border-b-[3px] border-x-[#d2d2d2] border-b-[#116bbf] px-[9px] pt-[2px] text-[#116bbf]"
    >
      Wareneingang WE2023/0016
    </a>
    <div className="flex h-[26px] flex-1 items-center justify-end border-t border-[#d2d2d2] pr-2">
      <Caret className="text-[#777]" />
    </div>
  </footer>
);

export default function App() {
  return (
    <div className="flex min-h-screen flex-col overflow-hidden bg-[#f7f7f7] font-['DejaVu_Sans_Condensed','DejaVu_Sans',sans-serif] text-[11px] leading-[14px]">
      <TitleBar />
      <Ribbon />
      <div className="mt-px flex flex-1 border-t border-[#dcdcdc]">
        <Sidebar />
        <DocumentArea />
        <PropertyPanel />
      </div>
      <BottomTabs />
    </div>
  );
}
